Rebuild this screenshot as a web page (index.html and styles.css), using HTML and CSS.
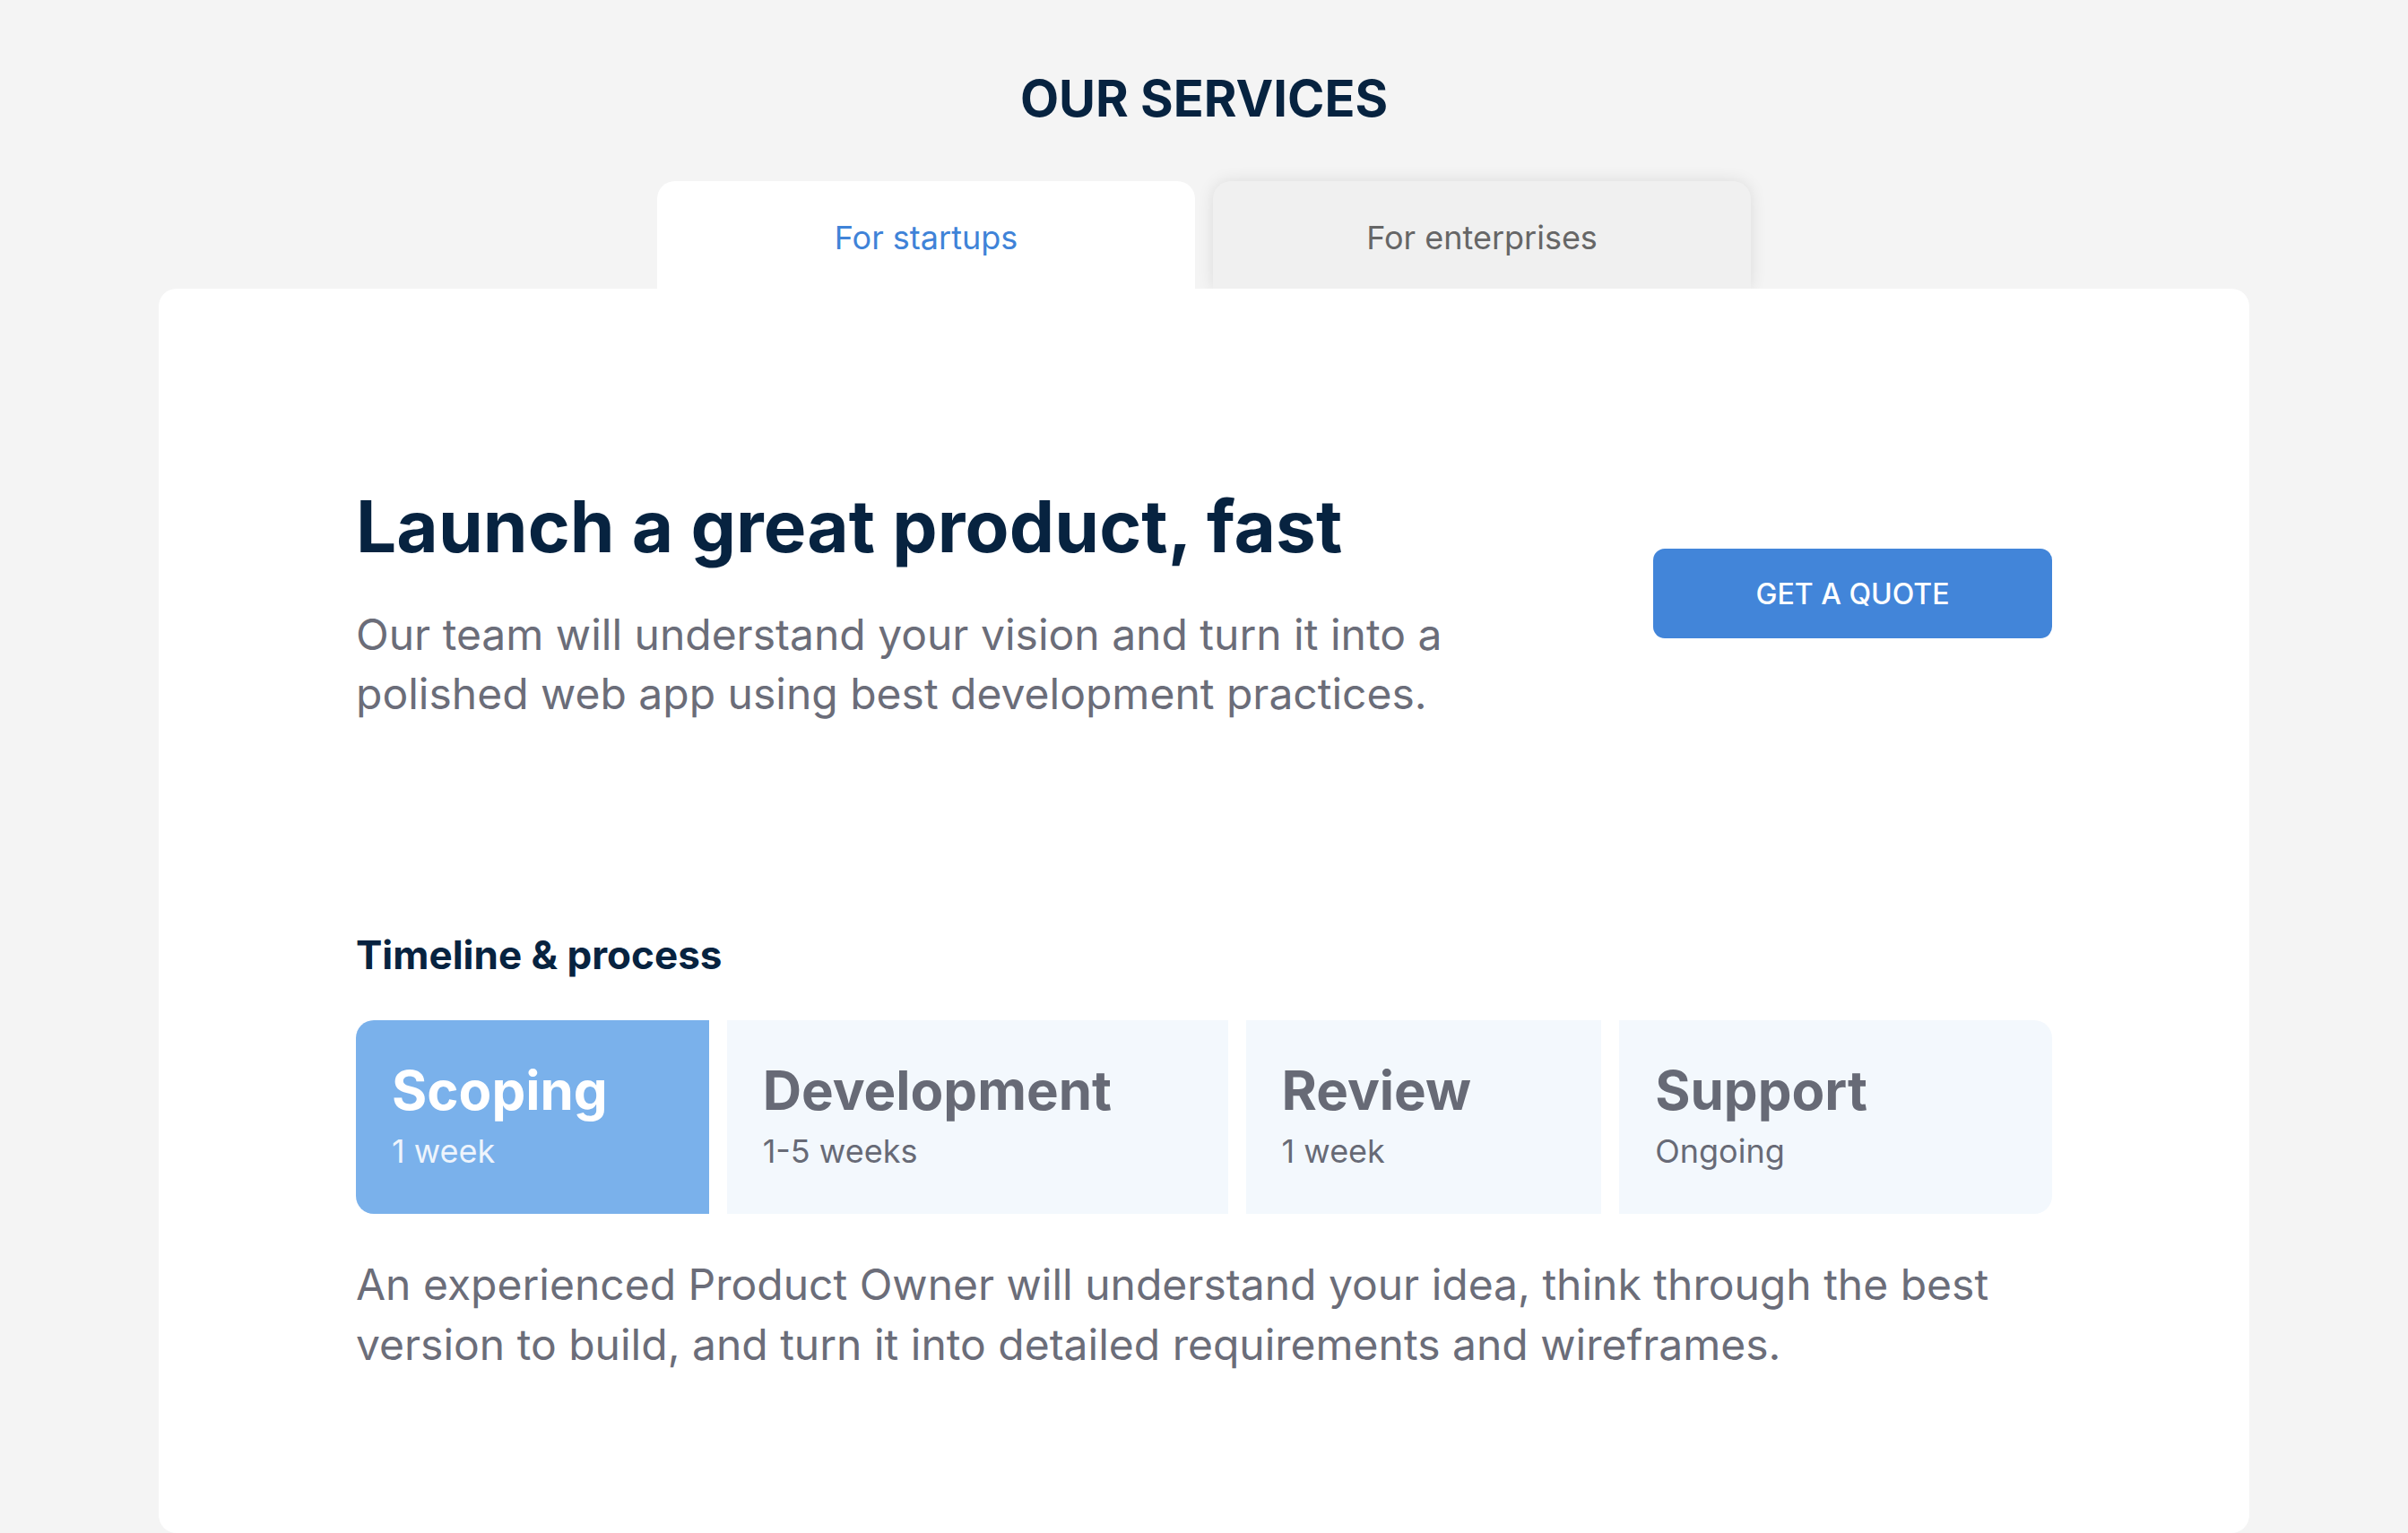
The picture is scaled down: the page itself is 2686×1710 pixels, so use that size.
FILE: index.html
```html
<!DOCTYPE html>
<html lang="en">
<head>
<meta charset="utf-8">
<title>Our Services</title>
<link rel="stylesheet" href="styles.css">
</head>
<body>
<main class="page">
  <h1 class="page-title">OUR SERVICES</h1>
  <div class="tabs">
    <button class="tab tab-active">For startups</button>
    <button class="tab tab-inactive">For enterprises</button>
  </div>
  <section class="card">
    <div class="hero">
      <div class="hero-text">
        <h2 class="hero-title">Launch a great product, fast</h2>
        <p class="hero-desc">Our team will understand your vision and turn it into a polished web app using best development practices.</p>
      </div>
      <a class="quote-btn" href="#">GET A QUOTE</a>
    </div>
    <h3 class="timeline-title">Timeline &amp; process</h3>
    <div class="steps">
      <div class="step step-active">
        <div class="step-name">Scoping</div>
        <div class="step-time">1 week</div>
      </div>
      <div class="step">
        <div class="step-name">Development</div>
        <div class="step-time">1-5 weeks</div>
      </div>
      <div class="step">
        <div class="step-name">Review</div>
        <div class="step-time">1 week</div>
      </div>
      <div class="step">
        <div class="step-name">Support</div>
        <div class="step-time">Ongoing</div>
      </div>
    </div>
    <p class="step-desc">An experienced Product Owner will understand your idea, think through the best version to build, and turn it into detailed requirements and wireframes.</p>
  </section>
</main>
</body>
</html>
```

FILE: styles.css
```css
* { box-sizing: border-box; }

html, body {
  margin: 0;
  padding: 0;
  background: #f4f4f4;
  font-family: Inter, "Noto Sans", "Liberation Sans", sans-serif;
  overflow: hidden;
}

.page {
  display: flex;
  flex-direction: column;
  align-items: center;
  padding-top: 75px;
}

.page-title {
  margin: 0;
  font-size: 56px;
  line-height: 70px;
  font-weight: 700;
  color: #072340;
}

.tabs {
  display: flex;
  gap: 20px;
  margin-top: 57px;
}

.tab {
  width: 600px;
  height: 120px;
  border: none;
  border-radius: 20px 20px 0 0;
  font-family: inherit;
  font-size: 36px;
  font-weight: 400;
  padding: 6px 0 0;
  cursor: pointer;
}

.tab-active {
  background: #ffffff;
  color: #3f83d8;
}

.tab-inactive {
  background: #f0f0f0;
  color: #666666;
  box-shadow: 0 0 18px rgba(0, 0, 0, 0.10);
}

.card {
  position: relative;
  z-index: 1;
  width: 2332px;
  min-height: 1388px;
  background: #ffffff;
  border-radius: 20px;
  padding: 217px 220px 120px;
}

.hero {
  display: flex;
  justify-content: space-between;
  align-items: flex-start;
}

.hero-title {
  margin: 0;
  font-size: 80px;
  line-height: 96px;
  font-weight: 700;
  color: #072340;
  letter-spacing: 0.1px;
}

.hero-desc {
  margin: 40px 0 0;
  max-width: 1260px;
  font-size: 48px;
  line-height: 66px;
  color: #6b6d79;
}

.quote-btn {
  margin-top: 73px;
  width: 445px;
  height: 100px;
  border-radius: 13px;
  background: #4285d9;
  color: #ffffff;
  font-size: 32px;
  font-weight: 500;
  text-decoration: none;
  display: flex;
  align-items: center;
  justify-content: center;
}

.timeline-title {
  margin: 232px 0 0;
  font-size: 44px;
  line-height: 53px;
  font-weight: 700;
  color: #072340;
}

.steps {
  margin-top: 46px;
  display: grid;
  grid-template-columns: 393fr 558fr 396fr 482fr;
  gap: 20px;
}

.step {
  height: 216px;
  padding: 42px 40px 0;
  background: #f3f8fd;
  color: #676a76;
}

.step:first-child { border-radius: 20px 0 0 20px; }
.step:last-child { border-radius: 0 20px 20px 0; }

.step-active {
  background: #7ab1eb;
  color: #ffffff;
}

.step-name {
  font-size: 60px;
  line-height: 72px;
  font-weight: 700;
}

.step-time {
  margin-top: 8px;
  font-size: 36px;
  line-height: 48px;
  font-weight: 400;
}

.step-active .step-time { color: #eef4fc; }

.step-desc {
  margin: 45px 0 0;
  font-size: 48px;
  line-height: 67px;
  color: #6b6d79;
}
```
